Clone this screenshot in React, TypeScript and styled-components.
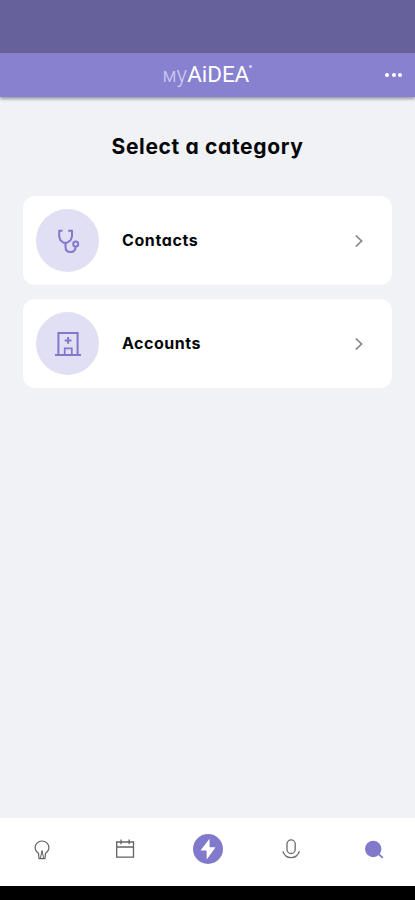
import React from 'react';
import styled, { createGlobalStyle } from 'styled-components';

const Global = createGlobalStyle`
  * { box-sizing: border-box; }
  body { margin: 0; background: #f0f2f6; }
`;

const Screen = styled.div`
  display: flex;
  flex-direction: column;
  width: 415px;
  height: 900px;
  overflow: hidden;
  background: #f0f2f6;
  font-family: Inter, sans-serif;
  font-feature-settings: 'cv11' 1;
  color: #070709;
`;

const StatusBar = styled.div`
  flex: 0 0 53px;
  background: #66619b;
`;

const Header = styled.header`
  flex: 0 0 44px;
  display: grid;
  grid-template-columns: 1fr auto 1fr;
  align-items: center;
  padding: 0 13px;
  background: #8781cf;
  box-shadow: 0 2px 3px rgba(40, 45, 60, 0.45);
`;

const Logo = styled.div`
  grid-column: 2;
  display: flex;
  align-items: baseline;
  height: 44px;
  line-height: 42px;
  font-family: Roboto, sans-serif;
  font-size: 22px;
  color: #fff;
`;

const LogoPart = styled.span<{ $size: number; $weight: number; $color: string; $spacing?: number }>`
  font-size: ${(p) => p.$size}px;
  font-weight: ${(p) => p.$weight};
  color: ${(p) => p.$color};
  letter-spacing: ${(p) => p.$spacing ?? 0}px;
`;

const LogoMark = styled.i`
  align-self: flex-start;
  width: 3px;
  height: 3px;
  margin: 12px 0 0;
  border-radius: 50%;
  background: #d5d2f1;
`;

const MenuButton = styled.button`
  justify-self: end;
  display: flex;
  gap: 2.4px;
  padding: 0;
  border: 0;
  background: none;
`;

const Dot = styled.span`
  width: 4px;
  height: 4px;
  border-radius: 50%;
  background: #fff;
`;

const Main = styled.main`
  flex: 1;
  display: flex;
  flex-direction: column;
  padding: 35px 23px 0;
`;

const Title = styled.h1`
  margin: 0 0 34px;
  font-size: 21px;
  line-height: 30px;
  font-weight: 700;
  letter-spacing: 0.65px;
  text-align: center;
  white-space: nowrap;
`;

const List = styled.div`
  display: flex;
  flex-direction: column;
  gap: 14px;
`;

const Card = styled.div`
  display: flex;
  align-items: center;
  height: 89px;
  padding: 0 27px 0 13px;
  border-radius: 12px;
  background: #fff;
`;

const Avatar = styled.div`
  display: grid;
  place-items: center;
  width: 63px;
  height: 63px;
  margin-right: 23px;
  border-radius: 50%;
  background: #e1dff3;
`;

const Label = styled.span<{ $spacing: number }>`
  flex: 1;
  padding-bottom: 2px;
  font-size: 16px;
  line-height: 24px;
  font-weight: 650;
  letter-spacing: ${(p) => p.$spacing}px;
`;

const Nav = styled.nav`
  flex: 0 0 68px;
  display: grid;
  grid-template-columns: repeat(5, 83px);
  place-items: center;
  padding-bottom: 6px;
  background: #fff;
`;

const BottomBar = styled.div`
  flex: 0 0 14px;
  background: #000;
`;

const Icon = styled.svg<{ $color: string; $width: number }>`
  display: block;
  fill: none;
  stroke: ${(p) => p.$color};
  stroke-width: ${(p) => p.$width};
`;

const NavIcon = styled(Icon)`
  margin-top: 2px;
`;

const purple = '#8179cc';

const Stethoscope = () => (
  <Icon $color={purple} $width={2} width="26" height="26" viewBox="0 0 26 26" strokeLinejoin="round">
    <path d="M7.5 2.8H4.2V8.5L5.4 12.2L8.6 14.7H12L15.6 12.2L17 8.5V2.8H13.2" />
    <path d="M10.5 14.7V19C10.5 22.2 12.7 24 15.6 24C18.6 24 20.7 22 20.7 18.2" />
    <circle cx="20.7" cy="15.9" r="2.5" />
  </Icon>
);

const Hospital = () => (
  <Icon $color={purple} $width={2} width="26" height="26" viewBox="0 0 26 26">
    <path d="M0 24H26M3.4 24V2H22.6V24" />
    <path d="M9.7 24V17.3H16.8V24" strokeWidth="1.7" />
    <path d="M13.1 6V12.8M9.7 9.4H16.5" />
  </Icon>
);

const Chevron = () => (
  <Icon $color="#858585" $width={1.7} width="14" height="14" viewBox="0 0 14 14">
    <path d="M4.8 1.5L10.6 7L4.8 12.5" />
  </Icon>
);

const Bulb = () => (
  <NavIcon $color="#626262" $width={1.2} width="24" height="24" viewBox="0 0 24 24" strokeLinejoin="round">
    <path d="M8.5 15.2C6.2 13.8 5.1 12 5.1 9.6C5.1 5.9 8.3 3 12 3S18.9 5.9 18.9 9.6C18.9 12 17.8 13.8 15.5 15.2L15 20.6H9Z" />
    <path d="M10.4 20.3L12 12.5L13.6 20.3" strokeWidth="1" />
  </NavIcon>
);

const Calendar = () => (
  <NavIcon $color="#626262" $width={1.3} width="24" height="24" viewBox="0 0 24 24">
    <path d="M3.7 4H20.5V19.2H3.7ZM3.7 9H20.5" />
    <path d="M8 1.5V6.2M16.1 1.5V6.2" />
  </NavIcon>
);

const Bolt = () => (
  <Icon $color="none" $width={0} width="30" height="30" viewBox="0 0 30 30">
    <circle cx="15" cy="15" r="15" fill={purple} />
    <path d="M16.5 4.7L7.5 16.6H13.5L13.8 25.5L22.5 13.2H16.6Z" fill="#fff" />
  </Icon>
);

const Mic = () => (
  <NavIcon $color="#6c6c6c" $width={1.3} width="24" height="24" viewBox="0 0 24 24">
    <rect x="8" y="1.9" width="8.2" height="13.6" rx="4.1" />
    <path d="M3.8 13.2C5.2 17.2 8.2 19.6 12.1 19.6S19 17.2 20.4 13.2" />
  </NavIcon>
);

const Search = () => (
  <NavIcon $color={purple} $width={1.8} width="24" height="24" viewBox="0 0 24 24">
    <circle cx="11.2" cy="11" r="8.2" fill={purple} stroke="none" />
    <path d="M16 15.5L20.8 19.8" />
  </NavIcon>
);

const categories = [
  { name: 'Contacts', icon: <Stethoscope />, spacing: 0.6 },
  { name: 'Accounts', icon: <Hospital />, spacing: 0.5 },
];

export default function App() {
  return (
    <Screen>
      <Global />
      <StatusBar />
      <Header>
        <Logo>
          <LogoPart $size={15.5} $weight={400} $color="#c9c5ee">M</LogoPart>
          <LogoPart $size={22} $weight={300} $color="#d3cff2" $spacing={0.4}>y</LogoPart>
          <LogoPart $size={22.5} $weight={400} $color="#fff" $spacing={-0.1}>AiDEA</LogoPart>
          <LogoMark />
        </Logo>
        <MenuButton aria-label="More">
          <Dot />
          <Dot />
          <Dot />
        </MenuButton>
      </Header>
      <Main>
        <Title>Select a category</Title>
        <List>
          {categories.map((c) => (
            <Card key={c.name}>
              <Avatar>{c.icon}</Avatar>
              <Label $spacing={c.spacing}>{c.name}</Label>
              <Chevron />
            </Card>
          ))}
        </List>
      </Main>
      <Nav>
        <Bulb />
        <Calendar />
        <Bolt />
        <Mic />
        <Search />
      </Nav>
      <BottomBar />
    </Screen>
  );
}
